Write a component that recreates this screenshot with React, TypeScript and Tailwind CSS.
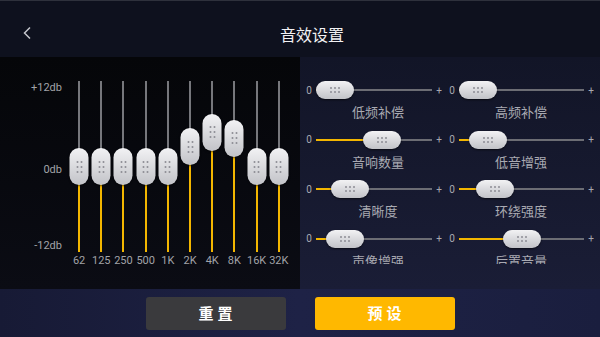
import React from "react";

const bands = [
  { label: "62", c: 85.5 },
  { label: "125", c: 85.5 },
  { label: "250", c: 85.5 },
  { label: "500", c: 85.5 },
  { label: "1K", c: 85.5 },
  { label: "2K", c: 65.5 },
  { label: "4K", c: 51 },
  { label: "8K", c: 57 },
  { label: "16K", c: 85.5 },
  { label: "32K", c: 85.5 },
];

const effects = [
  { label: "低频补偿", x: 0 },
  { label: "高频补偿", x: 0 },
  { label: "音响数量", x: 47 },
  { label: "低音增强", x: 10 },
  { label: "清晰度", x: 15 },
  { label: "环绕强度", x: 17 },
  { label: "声像增强", x: 10, clip: true },
  { label: "后置音量", x: 44, clip: true },
];

function VKnob({ top }: { top: number }) {
  return (
    <div
      className="absolute left-1/2 -translate-x-1/2 w-[19px] h-[37px] rounded-full bg-gradient-to-b from-[#f2f2f4] to-[#c2c3c8] shadow-[0_1px_2px_rgba(0,0,0,0.6)] flex items-center justify-center"
      style={{ top }}
    >
      <div className="grid grid-cols-2 gap-x-[2px] gap-y-[3px]">
        {Array.from({ length: 6 }).map((_, i) => (
          <div key={i} className="w-[2px] h-[2px] rounded-full bg-[#8c8d94]" />
        ))}
      </div>
    </div>
  );
}

function HKnob({ left }: { left: number }) {
  return (
    <div
      className="absolute top-0 w-[38px] h-[18px] rounded-full bg-gradient-to-b from-[#f2f2f4] to-[#c2c3c8] shadow-[0_1px_2px_rgba(0,0,0,0.6)] flex items-center justify-center"
      style={{ left }}
    >
      <div className="grid grid-cols-3 gap-x-[2px] gap-y-[2px]">
        {Array.from({ length: 6 }).map((_, i) => (
          <div key={i} className="w-[2px] h-[2px] rounded-full bg-[#8c8d94]" />
        ))}
      </div>
    </div>
  );
}

export default function App() {
  return (
    <div
      className="w-[600px] h-[337px] overflow-hidden flex flex-col bg-[#1b1f40]"
      style={{ fontFamily: "Roboto, 'Noto Sans CJK SC', sans-serif" }}
    >
      {/* Top bar */}
      <div className="h-[57px] shrink-0 flex items-center bg-[#0e111e] border-t border-[#2e313c]">
        <div className="w-[280px] pl-[22px] pt-[8px]">
          <svg width="12" height="14" viewBox="0 0 12 14" fill="none">
            <polyline points="8,1.5 2.5,7 8,12.5" stroke="#c4c6cc" strokeWidth="1.5" fill="none" />
          </svg>
        </div>
        <div
          className="pt-[9px] text-[16px] text-[#f2f2f4]"
          style={{ fontFamily: "'Noto Sans CJK SC', sans-serif" }}
        >
          音效设置
        </div>
      </div>

      {/* Middle */}
      <div className="h-[232px] shrink-0 flex">
        {/* EQ panel */}
        <div className="w-[300px] h-full flex bg-gradient-to-b from-[#050609] to-[#0b0c14]">
          <div className="w-[62px] pt-[23px] flex flex-col items-end text-[11px] leading-[16px] text-[#a2a3a8]">
            <span>+12db</span>
            <span className="mt-[66px]">0db</span>
            <span className="mt-[60px]">-12db</span>
          </div>
          <div className="ml-[6px] flex pt-[24px]">
            {bands.map((b) => (
              <div key={b.label} className="w-[22.2px] flex flex-col items-center">
                <div className="relative w-[22px] h-[171px]">
                  <div
                    className="absolute left-1/2 -translate-x-1/2 top-0 w-[2px] bg-[#76777c]"
                    style={{ height: b.c }}
                  />
                  <div
                    className="absolute left-1/2 -translate-x-1/2 bottom-0 w-[2px] bg-[#f3b600]"
                    style={{ height: 171 - b.c }}
                  />
                  <VKnob top={b.c - 18.5} />
                </div>
                <div className="mt-[2px] text-[11px] leading-[14px] text-[#a2a3a8] whitespace-nowrap">
                  {b.label}
                </div>
              </div>
            ))}
          </div>
        </div>

        {/* Effects panel */}
        <div className="w-[300px] h-full bg-gradient-to-b from-[#121527] to-[#1a1d36] pt-[24px] pl-[4px]">
          <div className="grid grid-cols-[139px_148px] gap-x-[4px] gap-y-[9.5px]">
            {effects.map((e, i) => (
              <div key={e.label} className="flex flex-col">
                <div className="flex items-center h-[18px] text-[10px] text-[#a8a9b0]">
                  <span className="w-[10px] text-center">0</span>
                  <div className="relative flex-1 h-[18px] ml-[2px] mr-[3px]">
                    <div className="absolute left-0 right-0 top-[8px] h-[2px] bg-[#6c6d74]" />
                    <div
                      className="absolute left-0 top-[8px] h-[2px] bg-[#f3b600]"
                      style={{ width: e.x + 4 }}
                    />
                    <HKnob left={e.x} />
                  </div>
                  <span className="w-[8px] text-center">+</span>
                </div>
                <div
                  className={
                    "mt-[4px] text-center text-[13px] leading-[18px] text-[#a9aab2] " +
                    (i % 2 === 0 ? "pl-[9px] " : "") +
                    (e.clip ? "h-[12px] overflow-hidden" : "h-[18px]")
                  }
                  style={{ fontFamily: "'Noto Sans CJK SC', sans-serif" }}
                >
                  {e.label}
                </div>
              </div>
            ))}
          </div>
        </div>
      </div>

      {/* Bottom bar */}
      <div className="flex-1 flex justify-center gap-[29px] pt-[8px] bg-gradient-to-r from-[#171a35] via-[#1e2246] to-[#1a1e3e]">
        <button
          className="w-[140px] h-[33px] rounded-[3px] bg-[#3a3a3d] text-white text-[15px] font-bold tracking-[4px] pl-[4px]"
          style={{ fontFamily: "'Noto Sans CJK SC', sans-serif" }}
        >
          重置
        </button>
        <button
          className="w-[140px] h-[33px] rounded-[3px] bg-[#ffb800] text-white text-[15px] font-bold tracking-[4px] pl-[4px]"
          style={{ fontFamily: "'Noto Sans CJK SC', sans-serif" }}
        >
          预设
        </button>
      </div>
    </div>
  );
}
